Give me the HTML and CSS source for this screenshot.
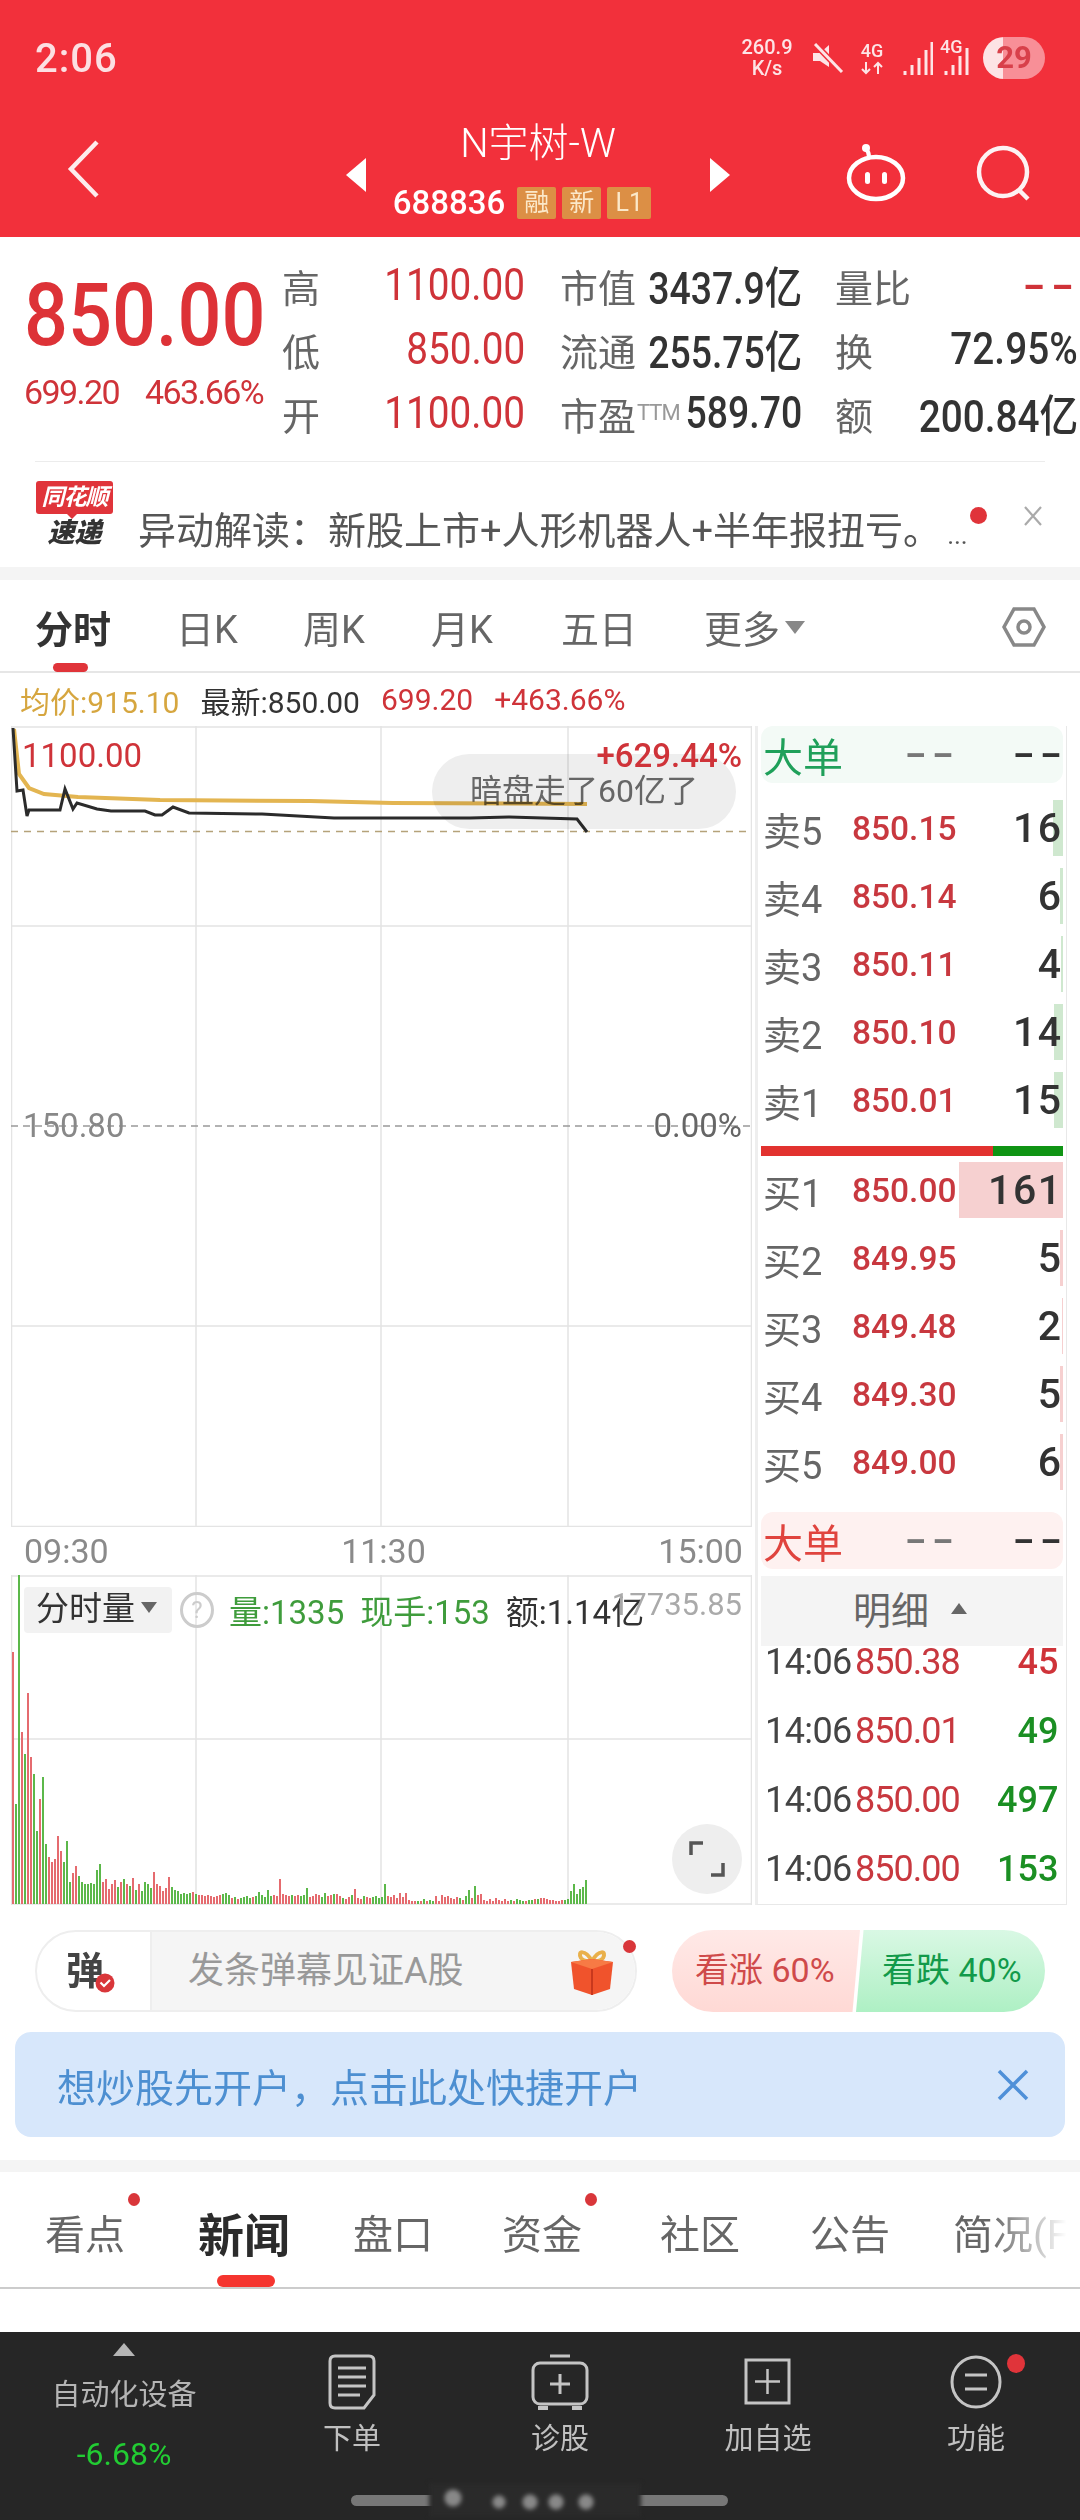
FILE: index.html
```html
<!DOCTYPE html>
<html lang="zh-CN">
<head>
    <meta charset="UTF-8">
    <meta name="viewport" content="width=device-width, initial-scale=1.0">
    <title>N宇树-W 688836</title>
    <link rel="stylesheet" href="styles.css">
</head>
<body>
    <header class="header">
        <div class="status">
            <span class="clock">2:06</span>
            <div class="status-right">
                <span class="speed">260.9<br>K/s</span>
                <svg class="mute" width="34" height="30" viewBox="0 0 34 30"><path d="M2 10h7l9-8v22l-9-6H2z" fill="#fde4e6"/><path d="M4 1l27 28" stroke="#f2303b" stroke-width="6"/><path d="M4 1l27 28" stroke="#fde4e6" stroke-width="3"/></svg>
                <span class="net"><b>4G</b><svg width="24" height="14" viewBox="0 0 24 14"><path d="M6 1v11M2 8l4 4 4-4M18 13V2M14 6l4-4 4 4" fill="none" stroke="#fde4e6" stroke-width="2"/></svg></span>
                <svg class="signal" width="30" height="36" viewBox="0 0 30 36"><path d="M2 31v4M9 25v10M16 18v17M23 10v25M29 2v33" stroke="#fde4e6" stroke-width="3"/></svg>
                <span class="net net-sim"><b>4G</b><svg width="30" height="36" viewBox="0 0 30 36"><path d="M4 31v4M11 25v10M18 16v19M25 8v27" stroke="#fde4e6" stroke-width="3"/></svg></span>
                <span class="battery">29</span>
            </div>
        </div>
        <nav class="nav">
            <svg class="back" width="40" height="60" viewBox="0 0 40 60"><path d="M32 3L6 30l26 27" fill="none" stroke="#fdeced" stroke-width="4.5"/></svg>
            <svg class="arrow-left" width="22" height="36" viewBox="0 0 22 36"><path d="M21 1v34L1 18z" fill="#fff"/></svg>
            <div class="stock">
                <div class="stock-name">N宇树-W</div>
                <div class="stock-code">688836<span class="tag">融</span><span class="tag">新</span><span class="tag tag-l">L1</span></div>
            </div>
            <svg class="arrow-right" width="22" height="36" viewBox="0 0 22 36"><path d="M1 1v34l20-17z" fill="#fff"/></svg>
            <svg class="robot" width="62" height="60" viewBox="0 0 62 60"><ellipse cx="31" cy="35" rx="27" ry="21" fill="none" stroke="#fff" stroke-width="4.5"/><path d="M24 14c0-4-1-6-3-8" fill="none" stroke="#fff" stroke-width="4"/><circle cx="21" cy="5" r="4" fill="#fff"/><rect x="20" y="29" width="5" height="12" rx="2.5" fill="#fff"/><rect x="37" y="29" width="5" height="12" rx="2.5" fill="#fff"/></svg>
            <svg class="search" width="58" height="56" viewBox="0 0 58 56"><ellipse cx="27" cy="27" rx="24" ry="24" fill="none" stroke="#fdf2f3" stroke-width="4.5"/><path d="M43 45l9 9" stroke="#fdf2f3" stroke-width="4.5"/></svg>
        </nav>
    </header>

    <section class="quote">
        <div class="quote-top">
            <div class="price-box">
                <div class="price">850.00</div>
                <div class="change"><span>699.20</span><span>463.66%</span></div>
            </div>
            <div class="stats">
                <div class="stat"><span>高</span><b class="red">1100.00</b></div>
                <div class="stat"><span>市值</span><b>3437.9亿</b></div>
                <div class="stat"><span>量比</span><b class="red dash">--</b></div>
                <div class="stat"><span>低</span><b class="red">850.00</b></div>
                <div class="stat"><span>流通</span><b>255.75亿</b></div>
                <div class="stat"><span>换</span><b>72.95%</b></div>
                <div class="stat"><span>开</span><b class="red">1100.00</b></div>
                <div class="stat"><span>市盈<sup class="ttm">TTM</sup></span><b>589.70</b></div>
                <div class="stat"><span>额</span><b>200.84亿</b></div>
            </div>
        </div>
        <div class="news">
            <div class="logo">
                <div class="logo-tag">同花顺</div>
                <div class="logo-text">速递</div>
            </div>
            <div class="news-text">异动解读&#xFF1A;新股上市+人形机器人+半年报扭亏。<small>...</small></div>
            <i class="news-dot"></i>
            <svg class="news-close" width="22" height="22" viewBox="0 0 22 22"><path d="M3 2l16 18M19 2L3 20" stroke="#aaa" stroke-width="2.2"/></svg>
        </div>
    </section>

    <section class="chart-tabs">
        <div class="chart-tabs-row">
            <span class="active">分时</span>
            <span>日K</span>
            <span>周K</span>
            <span>月K</span>
            <span>五日</span>
            <span>更多<i class="more-caret"></i></span>
        </div>
        <svg class="gear" width="44" height="44" viewBox="0 0 44 44"><path d="M12 4h20l10 18-10 18H12L2 22z" fill="none" stroke="#888" stroke-width="3.5"/><circle cx="22" cy="22" r="6" fill="none" stroke="#888" stroke-width="3.5"/></svg>
    </section>

    <div class="info-row">
        <span class="avg">均价:915.10</span>
        <span class="last">最新:850.00</span>
        <span class="red">699.20</span>
        <span class="red">+463.66%</span>
    </div>

    <section class="market">
        <div class="charts">
            <div class="price-chart">
                <svg width="741" height="801" viewBox="11 725 741 801">
                    <path d="M196 725V1526M381 725V1526M568 725V1526M11 925H752M11 1325H752M11.5 725V1526M751.5 725V1526M11 726H752M11 1525.5H752" stroke="#e4e4e4" stroke-width="1.5" fill="none"/>
                    <path d="M11 830.5H752" stroke="#b5a27a" stroke-width="1.5" stroke-dasharray="7 6"/>
                    <path d="M11 1125H752" stroke="#999" stroke-width="1.5" stroke-dasharray="7 5"/>
                    <polyline fill="none" stroke="#e3b551" stroke-width="4" points="14,728 19,773 29,787 44,793 78,796 160,799 310,800 393,802 587,803"/>
                    <polyline fill="none" stroke="#2b2b2b" stroke-width="3" points="13,727 17,790 23,789 27,815 29,809 60,809 65,788 73,808 77,802 97,808 111,810 145,810 155,814 162,814 173,806 189,812 262,813 334,817 378,817 470,817 509,816 577,818 587,831"/>
                </svg>
                <div class="bubble">暗盘走了60亿了</div>
                <span class="chart-label high">1100.00</span>
                <span class="chart-label high-pct">+629.44%</span>
                <span class="chart-label mid">150.80</span>
                <span class="chart-label mid-pct">0.00%</span>
            </div>
            <div class="time-axis"><span>09:30</span><span>11:30</span><span>15:00</span></div>
            <div class="vol-chart">
                <svg width="741" height="330" viewBox="11 1574 741 330">
                    <path d="M196 1574V1904M381 1574V1904M568 1574V1904M11 1738H752M11.5 1574V1904M751.5 1574V1904M11 1575H752M11 1903H752" stroke="#e4e4e4" stroke-width="1.5" fill="none"/>
                    <path id="barsUp" stroke="#e56b6f" stroke-width="2" fill="none"/>
                    <path id="barsDown" stroke="#5cb84a" stroke-width="2" fill="none"/>
                </svg>
                <div class="vol-head">
                    <span class="vol-select">分时量<i></i></span>
                    <span class="help">?</span>
                    <span class="green">量:1335</span>
                    <span class="green">现手:153</span>
                    <span class="amount">额:1.14亿</span>
                </div>
                <span class="vol-max">17735.85</span>
                <div class="expand">
                    <svg width="40" height="40" viewBox="0 0 40 40"><path d="M4 16V4h12M36 24v12H24" fill="none" stroke="#555" stroke-width="3.5"/></svg>
                </div>
            </div>
        </div>

        <aside class="book">
            <div class="big-order big-green"><span>大单</span><em>--</em><strong>--</strong></div>
            <div class="book-row"><span>卖5</span><b>850.15</b><i>16</i><u class="depth-sell" style="width:10px"></u></div>
            <div class="book-row"><span>卖4</span><b>850.14</b><i>6</i><u class="depth-sell" style="width:3px"></u></div>
            <div class="book-row"><span>卖3</span><b>850.11</b><i>4</i><u class="depth-sell" style="width:2px"></u></div>
            <div class="book-row"><span>卖2</span><b>850.10</b><i>14</i><u class="depth-sell" style="width:9px"></u></div>
            <div class="book-row"><span>卖1</span><b>850.01</b><i>15</i><u class="depth-sell" style="width:9px"></u></div>
            <div class="ratio"><span class="ratio-buy"></span><span class="ratio-sell"></span></div>
            <div class="book-row"><span>买1</span><b>850.00</b><i>161</i><u class="depth-buy" style="width:104px"></u></div>
            <div class="book-row"><span>买2</span><b>849.95</b><i>5</i><u class="depth-buy" style="width:3px"></u></div>
            <div class="book-row"><span>买3</span><b>849.48</b><i>2</i><u class="depth-buy" style="width:1px"></u></div>
            <div class="book-row"><span>买4</span><b>849.30</b><i>5</i><u class="depth-buy" style="width:3px"></u></div>
            <div class="book-row"><span>买5</span><b>849.00</b><i>6</i><u class="depth-buy" style="width:3px"></u></div>
            <div class="big-order big-red"><span>大单</span><em>--</em><strong>--</strong></div>
            <div class="detail-head">明细<i></i></div>
            <div class="ticks">
                <div class="tick"><span>14:06</span><b>850.38</b><i class="red">45</i></div>
                <div class="tick"><span>14:06</span><b>850.01</b><i class="down">49</i></div>
                <div class="tick"><span>14:06</span><b>850.00</b><i class="down">497</i></div>
                <div class="tick"><span>14:06</span><b>850.00</b><i class="down">153</i></div>
            </div>
        </aside>
    </section>

    <section class="social">
        <div class="danmu">
            <div class="danmu-icon">弹<svg width="20" height="20" viewBox="0 0 20 20"><circle cx="10" cy="10" r="9.5" fill="#d9363a"/><path d="M5.5 9.500l3.500 3.500 6-6" fill="none" stroke="#fff" stroke-width="2.200"/></svg></div>
            <div class="danmu-input">
                发条弹幕见证A股
                <svg class="gift" width="48" height="48" viewBox="0 0 48 48"><path d="M24 14C17 2 9 4 13 11c2 3 7 4 11 3zM24 14C31 2 39 4 35 11c-2 3-7 4-11 3z" fill="none" stroke="#e9b04a" stroke-width="4"/><path d="M3 15l21-3 21 3-3 27-18 6-18-6z" fill="#f0532c"/><path d="M3 15l21 7 21-7-21-3z" fill="#f77a45"/><path d="M24 22v26" stroke="#c9381d" stroke-width="2"/></svg>
            </div>
            <i class="danmu-dot"></i>
        </div>
        <div class="vote">
            <span class="vote-up">看涨 60%</span>
            <span class="vote-down">看跌 40%</span>
        </div>
    </section>

    <div class="banner">
        <span>想炒股先开户&#xFF0C;点击此处快捷开户</span>
        <svg width="32" height="32" viewBox="0 0 32 32"><path d="M2 2l28 28M30 2L2 30" stroke="#4f90d8" stroke-width="3.5"/></svg>
    </div>

    <section class="news-tabs">
        <div class="news-tabs-row">
            <span class="badge">看点</span>
            <span class="active">新闻</span>
            <span>盘口</span>
            <span class="badge">资金</span>
            <span>社区</span>
            <span>公告</span>
            <span>简况(F10)</span>
        </div>
    </section>

    <footer class="footer">
        <div class="sector">
            <i class="sector-caret"></i>
            <div class="sector-name">自动化设备</div>
            <div class="sector-pct">-6.68%</div>
        </div>
        <div class="foot-item">
            <svg width="50" height="56" viewBox="0 0 50 56"><path d="M8 2h34q5 0 5 5v34l-10 13H8q-5 0-5-5V7q0-5 5-5z" fill="none" stroke="#c4c4c4" stroke-width="3"/><path d="M11 14h28M11 23h28M11 32h28M11 41h22" stroke="#c4c4c4" stroke-width="3"/></svg>
            <span>下单</span>
        </div>
        <div class="foot-item">
            <svg width="60" height="56" viewBox="0 0 60 56"><path d="M20 2h20" stroke="#c4c4c4" stroke-width="3"/><rect x="3" y="9" width="54" height="41" rx="7" fill="none" stroke="#c4c4c4" stroke-width="3"/><path d="M8 52h10v4H8zM42 52h10v4H42z" fill="#c4c4c4"/><path d="M30 20v20M20 30h20" stroke="#c4c4c4" stroke-width="3"/></svg>
            <span>诊股</span>
        </div>
        <div class="foot-item">
            <svg width="50" height="56" viewBox="0 0 50 56"><rect x="3" y="6" width="43" height="43" fill="none" stroke="#c4c4c4" stroke-width="3"/><path d="M24.500 15v25M12 27.500h25" stroke="#c4c4c4" stroke-width="2.500"/></svg>
            <span>加自选</span>
        </div>
        <div class="foot-item foot-menu">
            <svg width="54" height="56" viewBox="0 0 54 56"><ellipse cx="27" cy="28" rx="24" ry="25" fill="none" stroke="#c4c4c4" stroke-width="3"/><path d="M16 21h22M16 35h22" stroke="#c4c4c4" stroke-width="3"/></svg>
            <span>功能</span>
            <i class="foot-dot"></i>
        </div>
        <div class="home-bar"><i></i></div>
    </footer>

    <script src="chart.js"></script>
</body>
</html>
```
FILE: styles.css
```css
* {
    box-sizing: border-box;
}
body {
    margin: 0;
    width: 1080px;
    height: 2520px;
    overflow: hidden;
    background-color: #fff;
    font-family: Roboto, "Noto Sans CJK SC", sans-serif;
    color: #333;
}
i, em, u {
    font-style: normal;
    text-decoration: none;
}
.red { color: #cf3339; }
.green { color: #3f9c3c; }

/* header */
.header {
    height: 237px;
    background-color: #f2303b;
    color: #fff;
}
.status {
    height: 116px;
    padding: 0 35px;
    display: flex;
    justify-content: space-between;
    align-items: center;
}
.clock {
    font-size: 40px;
    color: #fcdfe2;
    font-weight: 500;
    letter-spacing: 1px;
}
.status-right {
    display: flex;
    align-items: center;
}
.speed {
    width: 60px;
    font-size: 20px;
    line-height: 21px;
    text-align: center;
    font-weight: 500;
    color: #fde4e6;
}
.mute { margin-left: 14px; }
.net {
    width: 26px;
    margin-left: 14px;
    display: flex;
    flex-direction: column;
    align-items: center;
}
.net b {
    font-size: 18px;
    line-height: 20px;
    font-weight: 500;
    color: #fde4e6;
}
.signal { margin-left: 18px; }
.net-sim {
    width: 32px;
    margin-left: 8px;
    position: relative;
    height: 36px;
}
.net-sim b {
    position: absolute;
    top: -3px;
    left: -1px;
}
.battery {
    width: 62px;
    height: 42px;
    margin-left: 10px;
    border-radius: 21px;
    background: linear-gradient(90deg, #fde3e5 33%, #f88f97 33%);
    color: #d8404a;
    font-size: 31px;
    font-weight: 700;
    line-height: 42px;
    text-align: center;
}
.nav {
    height: 121px;
    display: flex;
    align-items: flex-start;
}
.back { margin: 23px 0 0 65px; }
.arrow-left { margin: 41px 0 0 240px; }
.stock {
    width: 342px;
    text-align: center;
}
.stock-name {
    font-size: 40px;
    line-height: 50px;
    font-weight: 300;
    margin-top: 3px;
}
.stock-code {
    display: flex;
    justify-content: center;
    align-items: center;
    font-size: 33px;
    line-height: 34px;
    margin-top: 17px;
    padding-right: 32px;
    font-weight: 500;
    white-space: nowrap;
}
.tag {
    width: 39px;
    height: 32px;
    margin-left: 6px;
    background-color: #dc8f45;
    color: #fbe8c9;
    border-radius: 2px;
    font-size: 25px;
    font-weight: 400;
    line-height: 32px;
}
.tag:first-of-type { margin-left: 12px; }
.tag-l { width: 44px; }
.arrow-right { margin: 41px 0 0 0; }
.robot { margin: 27px 0 0 114px; }
.search { margin: 29px 0 0 69px; }

/* quote */
.quote {
    height: 343px;
    position: relative;
    border-bottom: 13px solid #f4f4f4;
}
.quote-top {
    height: 225px;
    display: flex;
    margin: 0 35px;
    position: relative;
    border-bottom: 1px solid #ececec;
}
.price-box {
    width: 247px;
    margin-left: -35px;
    flex: none;
}
.price {
    width: 300px;
    margin: 30px 0 0 24px;
    font-size: 88px;
    line-height: 96px;
    font-weight: 500;
    color: #dd3237;
    transform: scaleX(.88);
    transform-origin: left;
}
.change {
    display: flex;
    gap: 26px;
    margin: 9px 0 0 24px;
    font-size: 34px;
    line-height: 40px;
    color: #cf3339;
    letter-spacing: -1.6px;
    white-space: nowrap;
}
.stats {
    width: 761px;
    flex: none;
    margin-top: 16px;
    display: grid;
    grid-template-columns: 243px 240px 243px;
    grid-auto-rows: 64px;
    column-gap: 35px;
    margin-left: 35px;
}
.stat {
    display: flex;
    justify-content: space-between;
    align-items: center;
}
.stat span {
    font-size: 38px;
    color: #666;
    white-space: nowrap;
}
.stat b {
    margin-left: -40px;
    font-size: 44px;
    font-weight: 500;
    white-space: nowrap;
    transform: scaleX(.88);
    transform-origin: right;
}
.stat:nth-child(3n+2) b {
    transform: scaleX(.85);
    margin-right: -2px;
}
.stat b.red { font-weight: 400; }
.stat b.dash {
    letter-spacing: 4px;
    font-weight: 500;
    transform: scaleX(1.5);
    margin-right: -2px;
}
.ttm {
    font-size: 22px;
    line-height: 0;
    color: #999;
    vertical-align: 10px;
    margin-left: 1px;
    letter-spacing: -1px;
}
.news {
    height: 91px;
    display: flex;
    padding: 19px 0 0 36px;
    position: relative;
}
.logo {
    width: 77px;
    flex: none;
}
.logo-tag {
    height: 33px;
    background-color: #e0343a;
    color: #fff;
    font-size: 23px;
    line-height: 33px;
    font-weight: 700;
    font-style: italic;
    text-align: center;
    border-radius: 3px;
    letter-spacing: -1px;
    position: relative;
}
.logo-tag::after {
    content: "";
    position: absolute;
    left: 31px;
    bottom: -5px;
    border: 5px solid transparent;
    border-top-color: #e0343a;
    border-bottom: 0;
}
.logo-text {
    font-size: 27px;
    line-height: 32px;
    margin-top: 3px;
    font-weight: 900;
    font-style: italic;
    text-align: center;
    color: #333;
}
.news-text {
    margin: 24px 0 0 25px;
    font-size: 38px;
    line-height: 52px;
    color: #555;
    white-space: nowrap;
}
.news-text small {
    font-size: 26px;
    margin-left: 6px;
}
.news-dot {
    position: absolute;
    left: 970px;
    top: 45px;
    width: 17px;
    height: 17px;
    border-radius: 50%;
    background-color: #e0343a;
}
.news-close {
    position: absolute;
    left: 1022px;
    top: 43px;
}

/* chart tabs */
.chart-tabs {
    height: 93px;
    border-bottom: 2px solid #e6e6e6;
    position: relative;
}
.chart-tabs-row {
    display: grid;
    grid-template-columns: 141px 127px 128px 130px 143px 160px;
    padding: 23px 0 0 35px;
    font-size: 38px;
    line-height: 54px;
    color: #666;
}
.chart-tabs-row .active {
    color: #333;
    font-weight: 700;
    position: relative;
}
.chart-tabs-row .active::after {
    content: "";
    position: absolute;
    left: 18px;
    top: 60px;
    width: 35px;
    height: 9px;
    border-radius: 5px;
    background-color: #e0343a;
}
.more-caret {
    display: inline-block;
    margin-left: 5px;
    vertical-align: 9px;
    border: 10px solid transparent;
    border-top: 13px solid #888;
    border-bottom: 0;
}
.gear {
    position: absolute;
    left: 1002px;
    top: 25px;
}
.info-row {
    height: 53px;
    padding-left: 20px;
    display: flex;
    align-items: center;
    gap: 21px;
    font-size: 30px;
    font-weight: 400;
    white-space: nowrap;
}
.avg { color: #d6a63f; }
.last { color: #333; }

/* market area */
.market {
    height: 1179px;
    display: flex;
}
.charts {
    width: 755px;
    flex: none;
}
.price-chart {
    margin-left: 11px;
    width: 741px;
    height: 801px;
    position: relative;
}
.price-chart svg, .vol-chart svg {
    display: block;
}
.chart-label {
    position: absolute;
    font-size: 33px;
    line-height: 36px;
    white-space: nowrap;
}
.high { left: 11px; top: 12px; color: #cf3339; }
.high-pct { right: 10px; top: 12px; color: #cf3339; font-weight: 500; }
.mid { left: 12px; top: 382px; color: #888; }
.mid-pct { right: 10px; top: 382px; color: #666; }
.bubble {
    position: absolute;
    left: 421px;
    top: 28px;
    width: 304px;
    height: 75px;
    border-radius: 38px;
    background-color: #eee;
    mix-blend-mode: multiply;
    color: #666;
    font-size: 32px;
    line-height: 75px;
    padding-left: 38px;
    white-space: nowrap;
}
.time-axis {
    height: 48px;
    padding: 0 12px 0 24px;
    display: flex;
    justify-content: space-between;
    align-items: center;
    font-size: 34px;
    color: #8a8a8a;
}
.vol-chart {
    margin-left: 11px;
    width: 741px;
    height: 330px;
    position: relative;
}
.vol-head {
    position: absolute;
    left: 13px;
    top: 11px;
    display: flex;
    align-items: center;
    font-size: 33px;
    white-space: nowrap;
}
.vol-select {
    width: 148px;
    height: 46px;
    background-color: #f2f2f2;
    border-radius: 4px;
    padding-left: 12px;
    line-height: 44px;
    color: #333;
}
.vol-select i {
    display: inline-block;
    margin-left: 6px;
    vertical-align: 7px;
    border: 8px solid transparent;
    border-top: 11px solid #666;
    border-bottom: 0;
}
.help {
    width: 34px;
    height: 36px;
    margin: 0 15px 0 8px;
    border: 3px solid #ccc;
    border-radius: 50%;
    color: #ccc;
    font-size: 24px;
    line-height: 30px;
    text-align: center;
}
.vol-head .green { margin-right: 16px; }
.amount { color: #333; }
.vol-max {
    position: absolute;
    right: 10px;
    top: 12px;
    font-size: 31px;
    line-height: 36px;
    color: #aaa;
}
.expand {
    position: absolute;
    left: 661px;
    top: 249px;
    width: 70px;
    height: 70px;
    border-radius: 50%;
    background-color: #eee;
    display: flex;
    align-items: center;
    justify-content: center;
}

/* order book */
.book {
    width: 312px;
    flex: none;
    height: 1179px;
    padding: 0 3.5px 0 3px;
    border-left: 3px solid #eee;
    border-right: 1.5px solid #e8e8e8;
    border-bottom: 1.5px solid #e8e8e8;
}
.big-order {
    height: 57px;
    border-radius: 12px;
    display: flex;
    align-items: center;
    padding-left: 2px;
    position: relative;
}
.big-order span {
    width: 142px;
    font-size: 40px;
    font-weight: 400;
}
.big-order em, .big-order strong {
    display: block;
    font-weight: 500;
    font-size: 40px;
    line-height: 40px;
    letter-spacing: 3.5px;
    transform: scaleX(1.6);
    transform-origin: left;
}
.big-order em { color: #777; width: 108px; }
.big-order strong { color: #333; }
.big-green {
    background-color: #f3faf6;
    margin-bottom: 11px;
}
.big-green span { color: #1fa05a; }
.big-red {
    background-color: #fef1f0;
    margin-top: 16px;
    margin-bottom: 7px;
}
.big-red span { color: #e0443e; }
.book-row {
    height: 68px;
    position: relative;
    display: flex;
    align-items: center;
    padding-left: 2px;
    white-space: nowrap;
}
.book-row span {
    width: 89px;
    font-size: 38px;
    color: #666;
}
.book-row b {
    font-size: 33.5px;
    font-weight: 500;
    color: #c8383f;
}
.book-row i {
    position: absolute;
    right: 0;
    font-size: 41px;
    font-weight: 500;
    color: #333;
    z-index: 1;
    letter-spacing: 1.5px;
}
.book-row u {
    position: absolute;
    right: 0;
    top: 6px;
    height: 56px;
}
.depth-sell { background-color: #cfe8cf; }
.depth-buy { background-color: #f6d0d0; }
.ratio {
    height: 10px;
    margin: 12px 0 0;
    display: flex;
}
.ratio-buy { width: 232px; background-color: #e2322f; }
.ratio-sell { flex: 1; background-color: #0f9414; }
.detail-head {
    height: 70px;
    background-color: #f4f4f4;
    padding-left: 92px;
    font-size: 38px;
    line-height: 70px;
    color: #666;
    position: relative;
    z-index: 1;
}
.detail-head i {
    display: inline-block;
    margin-left: 22px;
    vertical-align: 10px;
    border: 8px solid transparent;
    border-bottom: 11px solid #666;
    border-top: 0;
}
.ticks { margin-top: -19px; }
.tick {
    height: 69px;
    display: flex;
    align-items: center;
    padding-left: 4px;
    position: relative;
    font-size: 36px;
    white-space: nowrap;
}
.tick span {
    width: 90px;
    color: #444;
    letter-spacing: -.6px;
}
.tick b {
    font-weight: 400;
    color: #c8383f;
    letter-spacing: -1px;
}
.tick i {
    position: absolute;
    right: 4px;
    font-weight: 500;
}
.tick .down { color: #1b8f23; }

/* danmu and vote */
.social {
    height: 127px;
    padding-top: 25px;
    display: flex;
}
.danmu {
    width: 602px;
    height: 82px;
    margin-left: 35px;
    border: 2px solid #eee;
    border-radius: 41px;
    display: flex;
    position: relative;
    flex: none;
}
.danmu-icon {
    width: 115px;
    font-size: 38px;
    line-height: 78px;
    font-weight: 700;
    color: #444;
    padding-left: 29px;
    position: relative;
    border-right: 2px solid #eee;
}
.danmu-icon svg {
    position: absolute;
    left: 58px;
    top: 41px;
}
.danmu-input {
    flex: 1;
    background-color: #f5f5f5;
    border-radius: 0 40px 40px 0;
    padding-left: 36px;
    font-size: 36px;
    line-height: 78px;
    color: #999;
    position: relative;
}
.gift {
    position: absolute;
    left: 416px;
    top: 15px;
}
.danmu-dot {
    position: absolute;
    right: -1px;
    top: 8px;
    width: 13px;
    height: 13px;
    border-radius: 50%;
    background-color: #d9363a;
}
.vote {
    margin-left: 35px;
    width: 373px;
    height: 82px;
    display: flex;
    font-size: 34px;
    line-height: 80px;
    white-space: nowrap;
}
.vote-up {
    width: 188px;
    padding-left: 23px;
    border-radius: 41px 0 0 41px;
    background: linear-gradient(#ffe9e7, #ffd9d5);
    color: #cf4a4a;
    clip-path: polygon(0 0, 100% 0, 96% 100%, 0 100%);
}
.vote-down {
    width: 189px;
    margin-left: -4px;
    padding-left: 26px;
    border-radius: 0 41px 41px 0;
    background: linear-gradient(#d9f8e4, #aef0c4);
    color: #129a4a;
    clip-path: polygon(4% 0, 100% 0, 100% 100%, 0 100%);
}

.banner {
    height: 105px;
    margin: 0 15px;
    padding: 0 36px 0 42px;
    border-radius: 16px;
    background-color: #d7e7fb;
    color: #4d8fd1;
    font-size: 39px;
    display: flex;
    justify-content: space-between;
    align-items: center;
}

/* news tabs */
.news-tabs {
    height: 172px;
    margin-top: 23px;
    border-top: 12px solid #f4f4f4;
    position: relative;
}
.news-tabs-row {
    height: 117px;
    display: grid;
    grid-template-columns: 153px 155px 149px 158px 150px 143px 120px;
    padding: 33px 0 0 45px;
    border-bottom: 2px solid #ccc;
    overflow: hidden;
    position: relative;
    font-size: 40px;
    line-height: 62px;
    color: #666;
    white-space: nowrap;
}
.news-tabs-row::after {
    content: "";
    position: absolute;
    right: 0;
    top: 0;
    bottom: 0;
    width: 90px;
    background: linear-gradient(90deg, rgba(255,255,255,0), #fff 85%);
}
.news-tabs-row .active {
    font-size: 46px;
    font-weight: 700;
    color: #2b2b2b;
}
.news-tabs-row .active::after {
    content: "";
    position: absolute;
    left: 217px;
    bottom: 0;
    width: 58px;
    height: 12px;
    border-radius: 6px;
    background-color: #f5352f;
}
.badge { position: relative; }
.badge::after {
    content: "";
    position: absolute;
    left: 83px;
    top: -12px;
    width: 12px;
    height: 13px;
    border-radius: 50%;
    background-color: #d9363a;
}

/* footer */
.footer {
    height: 188px;
    background-color: #262626;
    position: relative;
    display: grid;
    grid-template-columns: 248px 208px 208px 208px 208px;
    color: #c0c0c0;
}
.sector {
    text-align: center;
    position: relative;
}
.sector-caret {
    display: block;
    width: 0;
    margin: 11px auto 0;
    border: 11px solid transparent;
    border-bottom: 13px solid #b5b5b5;
    border-top: 0;
}
.sector-name {
    margin-top: 17px;
    font-size: 29px;
    line-height: 44px;
    color: #b5b5b5;
}
.sector-pct {
    margin-top: 19px;
    font-size: 32px;
    line-height: 36px;
    color: #22cc33;
}
.foot-item {
    position: relative;
    padding-top: 22px;
    display: flex;
    flex-direction: column;
    align-items: center;
    font-size: 29px;
    line-height: 36px;
}
.foot-item span { margin-top: 11px; }
.foot-dot {
    position: absolute;
    left: 135px;
    top: 22px;
    width: 18px;
    height: 19px;
    border-radius: 50%;
    background-color: #e0343a;
}
.home-bar {
    position: absolute;
    left: 351px;
    top: 163px;
    width: 377px;
    height: 11px;
    border-radius: 6px;
    background-color: #777;
}
.home-bar i {
    position: absolute;
    left: 78px;
    top: -12px;
    width: 212px;
    height: 34px;
    filter: blur(2px);
    background:
        radial-gradient(circle at 24px 15px, #888 8px, transparent 9px),
        radial-gradient(circle at 70px 19px, #888 6px, transparent 7px),
        radial-gradient(circle at 101px 19px, #888 7px, transparent 8px),
        radial-gradient(circle at 127px 19px, #888 7px, transparent 8px),
        radial-gradient(circle at 157px 19px, #888 7px, transparent 8px),
        #2a2a2a;
}
```
FILE: chart.js
```js
// positive = up bar (red), negative = down bar (green)
const bars = [
    252, -100, -330, 172, -150, 211, 147, -130, -73, 105,
    -127, -60, 47, 42, 45, 68, 53, -42, -63, -22,
    31, 38, -28, -22, -20, -20, -21, -20, -34, -40,
    22, 25, 15, 20, 24, -17, 22, -25, 20, -18,
    26, -14, 20, -13, -22, -20, -16, 32, 20, 18,
    13, 16, 27, -17, -14, -13, -10, -11, -10, -11,
    12, -10, 9, 9, 8, 9, 8, 7, 8, 9,
    -10, -11, -9, 6, -7, 5, -6, -7, -8, -6,
    7, -8, -12, -9, -7, -14, -8, 9, 8, 25,
    10, 9, 8, -9, 8, 9, -8, -9, -16, 7,
    8, 10, 9, -7, -11, 8, 9, -10, 10, 8,
    -6, 5, 7, -9, 15, 6, 5, -8, 7, 6,
    -7, -8, -6, -7, -20, 8, 7, 9, 6, 11,
    7, 11, 4, 3, 3, -3, 3, -5, 3, -4,
    -3, 8, 3, 9, 7, 8, 6, 5, 7, -6,
    4, -8, -14, 6, -18, 9, 10, 4, 3, 5,
    3, 6, 4, 3, 5, 3, -4, 3, -5, -4,
    -3, 3, -4, -4, 5, -5, 6, 6, 5, 4,
    4, 3, 3, 4, -4, -5, -13, -20, -10, -15, -17, -24
];

let up = '';
let down = '';
bars.forEach((h, i) => {
    const seg = `M${13 + i * 3} 1903v${-Math.abs(h)}`;
    if (h > 0) up += seg;
    else down += seg;
});
document.getElementById('barsUp').setAttribute('d', up);
document.getElementById('barsDown').setAttribute('d', down);
```
